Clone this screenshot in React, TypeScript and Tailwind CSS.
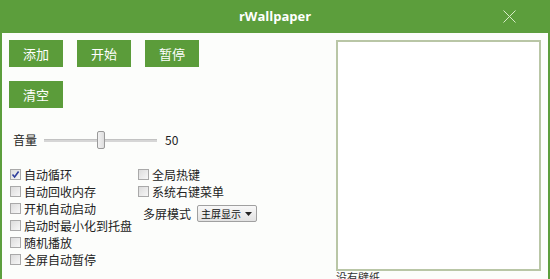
import React from "react";

const font = { fontFamily: '"Noto Sans CJK SC", "Noto Sans", sans-serif' };

function Btn({ label }: { label: string }) {
  return (
    <div className="w-[54px] h-[27px] bg-[#5b9c3a] text-white text-[13px] flex items-center justify-center leading-none">
      {label}
    </div>
  );
}

function Check({ label, checked }: { label: string; checked?: boolean }) {
  return (
    <div className="flex items-center h-[17px] gap-[3px]">
      <div className="w-[11px] h-[11px] border border-[#a9a9a9] bg-gradient-to-br from-[#dcdcdc] to-[#f7f7f7] flex items-center justify-center">
        {checked && (
          <svg width="9" height="9" viewBox="0 0 9 9">
            <path d="M1.5 4.5 L3.6 7 L7.6 1.5" stroke="#2f3f9c" strokeWidth="1.6" fill="none" />
          </svg>
        )}
      </div>
      <span className="text-[12px] text-[#222] leading-none whitespace-nowrap">{label}</span>
    </div>
  );
}

export default function App() {
  return (
    <div className="w-[550px] h-[279px] bg-[#5c9e3c] flex flex-col overflow-hidden" style={font}>
      <div className="h-[33px] shrink-0 relative flex items-center justify-center">
        <span className="text-white font-bold text-[13px]" style={{ fontFamily: '"Open Sans", "Noto Sans", sans-serif' }}>rWallpaper</span>
        <svg className="absolute right-[34px] top-[10px]" width="13" height="13" viewBox="0 0 13 13">
          <path d="M0.5 0.5 L12.5 12.5 M12.5 0.5 L0.5 12.5" stroke="#d8ecc8" strokeWidth="1" />
        </svg>
      </div>
      <div className="flex-1 mx-[2px] bg-[#fcfdfb] flex">
        <div className="w-[334px] shrink-0 flex flex-col">
          <div className="pl-[7px] pt-[7px] flex flex-col gap-[14px]">
            <div className="flex gap-[14px]">
              <Btn label="添加" />
              <Btn label="开始" />
              <Btn label="暂停" />
            </div>
            <div className="flex">
              <Btn label="清空" />
            </div>
          </div>
          <div className="flex items-center mt-[22px] h-[20px] pl-[11px]">
            <span className="text-[12px] text-[#222] w-[31px] leading-none">音量</span>
            <div className="relative w-[113px] h-[20px] flex items-center">
              <div className="w-full h-[3px] bg-[#d6d6d6] border-t border-[#c2c2c2]" />
              <div className="absolute left-[53px] top-[1px] w-[8px] h-[18px] rounded-[2px] border border-[#9a9a9a] bg-gradient-to-r from-[#f2f2f2] to-[#dedede]" />
            </div>
            <span className="text-[12px] text-[#222] ml-[8px] leading-none">50</span>
          </div>
          <div className="flex mt-[16px] pl-[8px]">
            <div className="w-[128px] flex flex-col">
              <Check label="自动循环" checked />
              <Check label="自动回收内存" />
              <Check label="开机自动启动" />
              <Check label="启动时最小化到托盘" />
              <Check label="随机播放" />
              <Check label="全屏自动暂停" />
            </div>
            <div className="flex flex-col">
              <Check label="全局热键" />
              <Check label="系统右键菜单" />
              <div className="flex items-center mt-[5px] ml-[5px] gap-[6px]">
                <span className="text-[12px] text-[#222] leading-none whitespace-nowrap">多屏模式</span>
                <div className="w-[60px] h-[17px] border border-[#a0a0a0] rounded-[2px] bg-gradient-to-b from-[#f8f8f8] to-[#e2e2e2] flex items-center justify-between pl-[3px] pr-[4px]">
                  <span className="text-[10px] text-[#111] leading-none whitespace-nowrap">主屏显示</span>
                  <svg width="7" height="4" viewBox="0 0 7 4"><path d="M0 0 L7 0 L3.5 4 Z" fill="#222" /></svg>
                </div>
              </div>
            </div>
          </div>
        </div>
        <div className="flex flex-col pt-[7px]">
          <div className="w-[205px] h-[231px] border-2 border-[#b9c6a6] bg-white" />
          <span className="text-[11px] text-[#333] mt-[1px] leading-none whitespace-nowrap">没有壁纸</span>
        </div>
      </div>
    </div>
  );
}
